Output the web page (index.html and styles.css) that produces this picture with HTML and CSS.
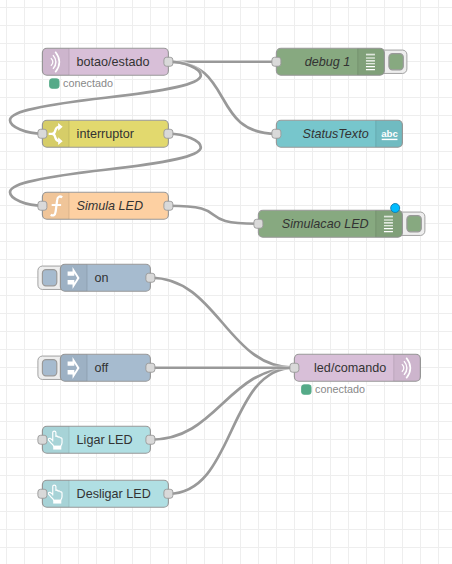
FILE: index.html
```html
<!DOCTYPE html>
<html lang="pt">
<head>
<meta charset="utf-8">
<title>Flow</title>
<link rel="stylesheet" href="styles.css">
</head>
<body>
<main class="workspace">
<svg class="canvas" width="452" height="564" viewBox="0 0 452 564">
  <defs>
    <g id="port"><rect class="port" x="-5" y="-5" width="10" height="10" rx="3"/></g>
    <g id="shade-left"><path class="shade" d="M5 0H30V30H5a5 5 0 0 1-5-5V5a5 5 0 0 1 5-5z"/><path class="divider" d="M29.5 .5V29.5"/></g>
    <g id="shade-right"><path class="shade" d="M0 0H25a5 5 0 0 1 5 5V25a5 5 0 0 1-5 5H0z"/><path class="divider" d="M.5 .5V29.5"/></g>
    <g id="icon-feed" class="icon-line">
      <path stroke-width="1.8" d="M14.3 3.8Q23.4 15.2 14.3 26.8"/>
      <path stroke-width="1.6" d="M11.8 7.6Q18.2 15.2 11.8 22.9"/>
      <path stroke-width="1.4" d="M9.4 11Q13.8 15.2 9.4 19.5"/>
    </g>
    <g id="icon-switch">
      <path class="icon-line" stroke-width="2.6" d="M7 15.2H12M19 7.3C14.5 7.3 15 10 14 12.500Q13 15.2 10.500 15.2Q13 15.2 14 18C15 20.500 14.5 23.2 19 23.2"/>
      <path class="icon-fill" d="M17.5 3L22.5 7.3 17.5 11.6zM17.5 18.9L22.5 23.2 17.5 27.5z"/>
    </g>
    <g id="icon-function" class="icon-line">
      <path stroke-width="2.5" d="M22 5.8C19.6 3.8 16.8 4.6 16.4 8.5L14.7 21.5C14.2 25.8 11.7 26.6 9.2 25"/>
      <path stroke-width="2.2" d="M10.3 14.2H20.8"/>
    </g>
    <g id="icon-inject"><path class="icon-fill" d="M8 8H13.5V3L21.3 15.2 13.500 27.400V22.4H8V17.6H15.500V20.500L18.700 15.2 15.5 9.900V12.8H8z"/></g>
    <g id="icon-debug" class="icon-line">
      <path stroke-width="1.9" opacity=".75" d="M9.5 7H19.5"/>
      <path stroke-width="1.3" d="M9.5 10.8H19.5M9.5 14H19.5M9.5 17.2H19.5M9.5 20.4H19.5M9.5 23.8H19.5"/>
    </g>
    <g id="icon-hand">
      <path class="icon-line" stroke-width="1.3" stroke-linejoin="round" d="M11.5 17V7Q11.5 5.4 13.2 5.4T15 7V11.3Q16.8 10.6 17.5 12.1Q19.2 11.4 19.8 12.9Q21.8 12.3 21.8 14.8V18.3Q21.8 19.8 20.3 22.2H12.5Q12 20.2 9.5 18.5L6.8 15.3Q6.3 13.2 8.4 13.3L11.5 15.5"/>
      <path class="icon-fill" d="M12 21.7H21V25.9H12z"/>
    </g>
    <g id="status-dot"><rect class="dot" x="8" y="34" width="10.500" height="10.500" rx="2.5"/></g>
    <g id="button-left"><rect class="button" x="-25" y="2" width="32" height="26" rx="5"/></g>
    <g id="button-right"><rect class="button" x="-7" y="2" width="32" height="26" rx="5"/></g>
  </defs>

  <g transform="translate(6.4 7.75) scale(.9)">
    <g class="wires">
      <path class="halo" d="M180 60C255 60 225 60 300 60"/><path d="M180 60C255 60 225 60 300 60"/>
      <path class="halo" d="M180 60C255 60 225 140 300 140"/><path d="M180 60C255 60 225 140 300 140"/>
      <path class="halo" d="M180 60C198 60 216 67.5 216 75S198 90 110 100S4 117.5 4 125S22 140 40 140"/><path d="M180 60C198 60 216 67.5 216 75S198 90 110 100S4 117.5 4 125S22 140 40 140"/>
      <path class="halo" d="M180 140C198 140 216 147.5 216 155S198 170 110 180S4 197.5 4 205S22 220 40 220"/><path d="M180 140C198 140 216 147.5 216 155S198 170 110 180S4 197.5 4 205S22 220 40 220"/>
      <path class="halo" d="M180 220C255 220 205 240 280 240"/><path d="M180 220C255 220 205 240 280 240"/>
      <path class="halo" d="M160 300C235 300 245 400 320 400"/><path d="M160 300C235 300 245 400 320 400"/>
      <path class="halo" d="M160 480C235 480 245 400 320 400"/><path d="M160 480C235 480 245 400 320 400"/>
      <path class="halo" d="M180 540C255 540 245 400 320 400"/><path d="M180 540C255 540 245 400 320 400"/>
      <path class="halo" d="M160 400H320"/><path d="M160 400H320"/>
    </g>

    <g transform="translate(40 45)">
      <rect class="node mqtt" width="140" height="30" rx="5"/>
      <use href="#shade-left"/><use href="#icon-feed"/>
      <text class="label" x="38" y="20">botao/estado</text>
      <use href="#port" x="140" y="15"/>
      <rect class="status-back" x="22" y="33" width="58" height="13"/>
      <use href="#status-dot"/><text class="status" x="23" y="43">conectado</text>
    </g>

    <g transform="translate(300 45)">
      <use href="#button-right" x="120"/><rect class="button-face debug" x="125" y="6" width="16" height="18" rx="4"/>
      <rect class="node debug" width="120" height="30" rx="5"/>
      <use href="#shade-right" x="90"/><use href="#icon-debug" x="90"/>
      <text class="label italic end" x="82" y="20">debug 1</text>
      <use href="#port" y="15"/>
    </g>

    <g transform="translate(40 125)">
      <rect class="node switch" width="140" height="30" rx="5"/>
      <use href="#shade-left"/><use href="#icon-switch"/>
      <text class="label" x="38" y="20">interruptor</text>
      <use href="#port" y="15"/><use href="#port" x="140" y="15"/>
    </g>

    <g transform="translate(300 125)">
      <rect class="node ui-text" width="140" height="30" rx="5"/>
      <use href="#shade-right" x="110"/>
      <text class="abc" x="116.5" y="18.5" textLength="18.5" lengthAdjust="spacingAndGlyphs">abc</text>
      <path class="icon-line" stroke-width="1.6" d="M117 21.3H134.5"/>
      <text class="label italic end" x="102.5" y="20">StatusTexto</text>
      <use href="#port" y="15"/>
    </g>

    <g transform="translate(40 205)">
      <rect class="node function" width="140" height="30" rx="5"/>
      <use href="#shade-left"/><use href="#icon-function"/>
      <text class="label italic" x="38" y="20">Simula LED</text>
      <use href="#port" y="15"/><use href="#port" x="140" y="15"/>
    </g>

    <g transform="translate(280 225)">
      <use href="#button-right" x="160"/><rect class="button-face debug" x="165" y="6" width="16" height="18" rx="4"/>
      <rect class="node debug" width="160" height="30" rx="5"/>
      <use href="#shade-right" x="130"/><use href="#icon-debug" x="130"/>
      <text class="label italic end" x="122.5" y="20">Simulacao LED</text>
      <use href="#port" y="15"/>
      <circle class="changed" cx="152" cy="-2.5" r="5"/>
    </g>

    <g transform="translate(60 285)">
      <use href="#button-left"/><rect class="button-face inject" x="-20" y="6" width="16" height="18" rx="4"/>
      <rect class="node inject" width="100" height="30" rx="5"/>
      <use href="#shade-left"/><use href="#icon-inject"/>
      <text class="label" x="38" y="20">on</text>
      <use href="#port" x="100" y="15"/>
    </g>

    <g transform="translate(60 385)">
      <use href="#button-left"/><rect class="button-face inject" x="-20" y="6" width="16" height="18" rx="4"/>
      <rect class="node inject" width="100" height="30" rx="5"/>
      <use href="#shade-left"/><use href="#icon-inject"/>
      <text class="label" x="38" y="20">off</text>
      <use href="#port" x="100" y="15"/>
    </g>

    <g transform="translate(320 385)">
      <rect class="node mqtt" width="140" height="30" rx="5"/>
      <use href="#shade-right" x="110"/><use href="#icon-feed" x="110"/>
      <text class="label end" x="102" y="20">led/comando</text>
      <use href="#port" y="15"/>
      <rect class="status-back" x="22" y="33" width="58" height="13"/>
      <use href="#status-dot"/><text class="status" x="23" y="43">conectado</text>
    </g>

    <g transform="translate(40 465)">
      <rect class="node ui-button" width="120" height="30" rx="5"/>
      <use href="#shade-left"/><use href="#icon-hand"/>
      <text class="label" x="38" y="20">Ligar LED</text>
      <use href="#port" y="15"/><use href="#port" x="120" y="15"/>
    </g>

    <g transform="translate(40 525)">
      <rect class="node ui-button" width="140" height="30" rx="5"/>
      <use href="#shade-left"/><use href="#icon-hand"/>
      <text class="label" x="38" y="20">Desligar LED</text>
      <use href="#port" y="15"/><use href="#port" x="140" y="15"/>
    </g>
  </g>
</svg>
</main>
</body>
</html>
```
FILE: styles.css
```css
body {
  margin: 0;
  background: #fff;
}

.workspace {
  width: 452px;
  height: 564px;
  overflow: hidden;
  background-color: #fff;
  background-image:
    linear-gradient(to right, #eee 1px, transparent 1px),
    linear-gradient(to bottom, #eee 1px, transparent 1px);
  background-size: 18px 18px;
  background-position: 6px 7px;
}

.canvas {
  display: block;
  font-family: "Liberation Sans", Arial, sans-serif;
}

.wires path {
  fill: none;
  stroke: #999;
  stroke-width: 3;
}

.wires .halo {
  stroke: #fff;
  stroke-opacity: .4;
  stroke-width: 5;
}

.node {
  stroke: #999;
  stroke-width: 1.3;
}

.mqtt { fill: #d8bfd8; }
.debug { fill: #87a980; }
.switch { fill: #e2d96e; }
.function { fill: #fdd0a2; }
.inject { fill: #a6bbcf; }
.ui-text { fill: #77c6cc; }
.ui-button { fill: #b0dfe3; }

.shade {
  fill: #000;
  fill-opacity: .05;
}

.divider {
  stroke: #000;
  stroke-opacity: .1;
}

.port {
  fill: #d9d9d9;
  stroke: #999;
}

.button {
  fill: #eee;
  stroke: #999;
}

.button-face {
  stroke: #999;
  stroke-width: 1.3;
}

.icon-line {
  fill: none;
  stroke: #fff;
}

.icon-fill {
  fill: #fff;
}

.label {
  fill: #333;
  font-size: 14px;
}

.italic {
  font-style: italic;
}

.end {
  text-anchor: end;
}

.abc {
  fill: #fff;
  font: bold 11px "Liberation Sans", Arial, sans-serif;
}

.status {
  fill: #888;
  font-size: 12px;
}

.status-back {
  fill: #fff;
  fill-opacity: .9;
}

.dot {
  fill: #5a8;
  stroke: #5a8;
}

.changed {
  fill: #00bcff;
  stroke: #1478a8;
}
```
